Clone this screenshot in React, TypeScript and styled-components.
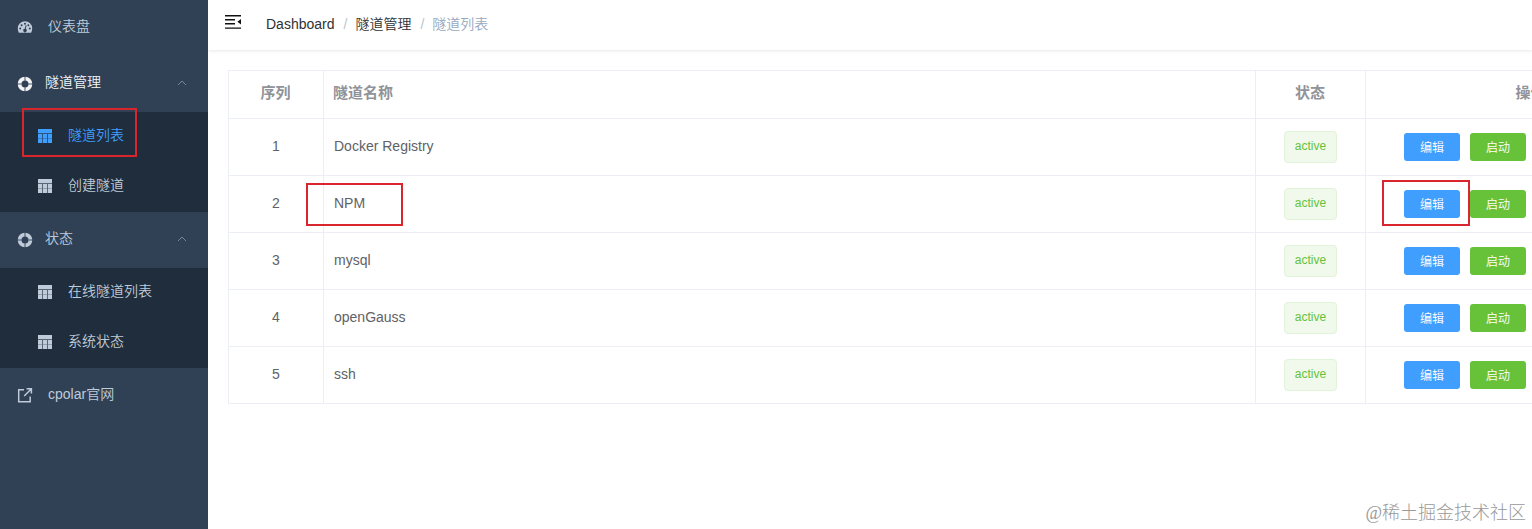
import React from 'react';
import styled, { createGlobalStyle } from 'styled-components';

const GlobalStyle = createGlobalStyle`
  * { box-sizing: border-box; }
  body {
    margin: 0;
    overflow: hidden;
    background: #fff;
    font-family: "Liberation Sans", "Noto Sans CJK SC", sans-serif;
    font-size: 14px;
    font-weight: 350;
  }
`;

const Layout = styled.div`
  position: relative;
  display: flex;
  width: 100%;
  height: 100vh;
  overflow: hidden;
`;

const Sidebar = styled.nav`
  flex: 0 0 208px;
  background: #304156;
`;

const MenuItem = styled.div<{ $tone?: string; $gap?: number }>`
  display: flex;
  align-items: center;
  height: 56px;
  padding: 0 21px 0 17px;
  color: ${(p) => p.$tone ?? '#bfcbd9'};
  svg { flex: none; }
  > svg:first-child { margin-right: ${(p) => p.$gap ?? 15}px; }
`;

const Label = styled.span`
  line-height: 20px;
  padding-bottom: 4px;
  white-space: nowrap;
`;

const Arrow = styled.svg`
  margin-left: auto;
  margin-bottom: 3px;
`;

const SubMenu = styled.div`
  background: #1f2d3d;
`;

const SubItem = styled(MenuItem)`
  height: 50px;
  padding-left: 37px;
`;

const Main = styled.main`
  flex: 1;
  min-width: 0;
  overflow: hidden;
`;

const Navbar = styled.header`
  display: flex;
  height: 50px;
  padding: 14px 0 0 17px;
  box-shadow: 0 1px 3px rgba(0, 21, 41, 0.1);
`;

const Breadcrumb = styled.div`
  display: flex;
  margin-left: 25px;
  line-height: 20px;
  color: #303133;
`;

const Slash = styled.span`
  margin: 0 8px 0 9px;
  color: #c0c4cc;
`;

const Current = styled.span`
  color: #97a8be;
`;

const Table = styled.div`
  width: 1469px;
  margin: 20px 0 0 20px;
  border-top: 1px solid #ebeef5;
  border-left: 1px solid #ebeef5;
  color: #606266;
`;

const Row = styled.div<{ $head?: boolean }>`
  display: grid;
  grid-template-columns: 95px 932px 110px 331px;
  height: ${(p) => (p.$head ? 48 : 57)}px;
  color: ${(p) => (p.$head ? '#909399' : 'inherit')};
  font-size: ${(p) => (p.$head ? 15 : 14)}px;
  font-weight: ${(p) => (p.$head ? 700 : 400)};
`;

const Cell = styled.div<{ $align?: string; $head?: boolean }>`
  display: flex;
  align-items: center;
  justify-content: ${(p) => p.$align ?? 'center'};
  padding: 0 10px ${(p) => (p.$head ? 4 : 0)}px ${(p) => (p.$head ? 9 : 10)}px;
  border-right: 1px solid #ebeef5;
  border-bottom: 1px solid #ebeef5;
  line-height: 22px;
  white-space: nowrap;
`;

const Text = styled.span`
  padding-bottom: 3px;
`;

const Tag = styled.span`
  height: 32px;
  padding: 0 10px;
  border: 1px solid #e1f3d8;
  border-radius: 4px;
  background: #f0f9eb;
  color: #67c23a;
  font-size: 12px;
  line-height: 28px;
`;

const Actions = styled(Cell)`
  justify-content: flex-start;
  gap: 10px;
  padding-left: 38px;
`;

const Button = styled.button<{ $color: string }>`
  width: 56px;
  height: 28px;
  padding: 1px 0 0;
  border: 0;
  border-radius: 3px;
  background: ${(p) => p.$color};
  color: #fff;
  font: 350 12px/20px "Liberation Sans", "Noto Sans CJK SC", sans-serif;
`;

const Highlight = styled.div<{ $x: number; $y: number; $w: number; $h: number }>`
  position: absolute;
  left: ${(p) => p.$x}px;
  top: ${(p) => p.$y}px;
  width: ${(p) => p.$w}px;
  height: ${(p) => p.$h}px;
  border: 2px solid #d9262c;
`;

const Watermark = styled.div`
  position: absolute;
  right: 6px;
  bottom: 3px;
  color: #999;
  font: 300 18px/26px "Liberation Serif", "Noto Sans CJK SC", serif;
  white-space: nowrap;
`;

const GaugeIcon = () => (
  <svg width="16" height="16" viewBox="0 0 16 16">
    <path fill="currentColor" d="M8 1.2A7.2 7.2 0 0 0 .8 8.4c0 1.6.4 3 1.1 4.3h12.2c.7-1.3 1.1-2.7 1.1-4.3A7.2 7.2 0 0 0 8 1.2z" />
    <g fill="#304156">
      <circle cx="3.2" cy="8.6" r="1" />
      <circle cx="4.6" cy="5.2" r="1" />
      <circle cx="8" cy="3.7" r="1" />
      <circle cx="11.4" cy="5.2" r="1" />
      <circle cx="12.8" cy="8.6" r="1" />
      <path d="M8.6 5.3l1 .3-.8 3.4a1.7 1.7 0 1 1-1-.2z" />
    </g>
  </svg>
);

const RingIcon = () => (
  <svg width="16" height="16" viewBox="0 0 16 16">
    <circle cx="8" cy="8" r="5.4" fill="none" stroke="currentColor" strokeWidth="3.8" />
    <path d="M8 0v4.8M8 11.2V16M0 8h4.8M11.2 8H16" stroke="#304156" strokeWidth=".9" />
  </svg>
);

const TableIcon = () => (
  <svg width="16" height="16" viewBox="0 0 16 16">
    <path fill="currentColor" fillOpacity=".72" d="M1 0h14v14H1z" />
    <path fill="currentColor" d="M1 0h14v4H1z M1 5h4v4H1z M6 5h4v4H6z M11 5h4v4h-4z M1 10h4v4H1z M6 10h4v4H6z M11 10h4v4h-4z" />
    <path fill="#1f2d3d" fillOpacity=".5" d="M5 4h1v10H5z M10 4h1v10h-1z M1 4h14v1H1z" />
  </svg>
);

const LinkIcon = () => (
  <svg width="16" height="16" viewBox="0 0 16 16" fill="none" stroke="currentColor" strokeWidth="1.5">
    <path d="M7 1.7H1.7v12h11.5V8.5M9.6 .8H14.4V5.6M14.2 1L7.2 8" />
  </svg>
);

const FoldIcon = () => (
  <svg width="16" height="16" viewBox="0 0 16 16">
    <path fill="#111" d="M0 1h16v1.4H0z M0 5h10v1.4H0z M0 9h10v1.4H0z M0 13.4h16v1.4H0z M16 5v5.4L12.4 7.7z" />
  </svg>
);

const Chevron = () => (
  <Arrow width="10" height="8" viewBox="0 0 10 8" fill="none" stroke="#77879a" strokeWidth="1">
    <path d="M1 6l4-4 4 4" />
  </Arrow>
);

const tunnels = ['Docker Registry', 'NPM', 'mysql', 'openGauss', 'ssh'];

export default function App() {
  return (
    <Layout>
      <GlobalStyle />
      <Sidebar>
        <MenuItem><GaugeIcon /><Label>仪表盘</Label></MenuItem>
        <MenuItem $tone="#f4f4f5" $gap={12}><RingIcon /><Label>隧道管理</Label><Chevron /></MenuItem>
        <SubMenu>
          <SubItem $tone="#409eff"><TableIcon /><Label>隧道列表</Label></SubItem>
          <SubItem><TableIcon /><Label>创建隧道</Label></SubItem>
        </SubMenu>
        <MenuItem $gap={12}><RingIcon /><Label>状态</Label><Chevron /></MenuItem>
        <SubMenu>
          <SubItem><TableIcon /><Label>在线隧道列表</Label></SubItem>
          <SubItem><TableIcon /><Label>系统状态</Label></SubItem>
        </SubMenu>
        <MenuItem><LinkIcon /><Label>cpolar官网</Label></MenuItem>
      </Sidebar>
      <Main>
        <Navbar>
          <FoldIcon />
          <Breadcrumb>
            <span>Dashboard</span><Slash>/</Slash>
            <span>隧道管理</span><Slash>/</Slash>
            <Current>隧道列表</Current>
          </Breadcrumb>
        </Navbar>
        <Table>
          <Row $head>
            <Cell $head>序列</Cell>
            <Cell $head $align="flex-start">隧道名称</Cell>
            <Cell $head>状态</Cell>
            <Cell $head>操作</Cell>
          </Row>
          {tunnels.map((name, i) => (
            <Row key={name}>
              <Cell><Text>{i + 1}</Text></Cell>
              <Cell $align="flex-start"><Text>{name}</Text></Cell>
              <Cell><Tag>active</Tag></Cell>
              <Actions>
                <Button $color="#409eff">编辑</Button>
                <Button $color="#67c23a">启动</Button>
              </Actions>
            </Row>
          ))}
        </Table>
      </Main>
      <Highlight $x={22} $y={108} $w={115} $h={49} />
      <Highlight $x={306} $y={183} $w={97} $h={43} />
      <Highlight $x={1382} $y={180} $w={88} $h={46} />
      <Watermark>@稀土掘金技术社区</Watermark>
    </Layout>
  );
}
